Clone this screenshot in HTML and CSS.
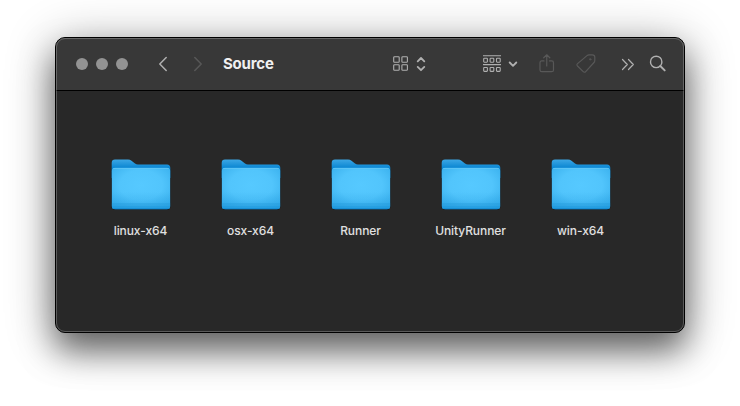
FILE: index.html
```html
<!DOCTYPE html>
<html lang="en">
<head>
<meta charset="utf-8">
<title>Source</title>
<link rel="stylesheet" href="styles.css">
</head>
<body>
<svg width="0" height="0" class="defs" aria-hidden="true">
  <defs>
    <linearGradient id="back" x1="0" y1="0" x2="0" y2="1">
      <stop offset="0" stop-color="#3ba6e4"/>
      <stop offset=".45" stop-color="#0a86d2"/>
      <stop offset="1" stop-color="#0a83cc"/>
    </linearGradient>
    <radialGradient id="front" cx=".5" cy=".42" r=".72">
      <stop offset="0" stop-color="#56c9ff"/>
      <stop offset=".5" stop-color="#52c5fc"/>
      <stop offset="1" stop-color="#35acea"/>
    </radialGradient>
    <linearGradient id="shade" x1="0" y1="0" x2="0" y2="1">
      <stop offset="0" stop-color="#1f98dc" stop-opacity="0"/>
      <stop offset="1" stop-color="#1f98dc" stop-opacity=".4"/>
    </linearGradient>
    <clipPath id="front-clip"><rect x="1.700" y="9.700" width="58.600" height="41.500" rx="3.500"/></clipPath>
    <symbol id="folder" viewBox="0 0 62 53">
      <rect x="1.500" y="10" width="59" height="42" rx="4" fill="#161e24"/>
      <path d="M1.700 14V5Q1.700 1.600 5 1.600H18Q20 1.600 21.500 2.800L25 5.500Q26.300 6.500 28 6.500H57Q60.300 6.500 60.300 10V20H1.700Z" fill="url(#back)"/>
      <g clip-path="url(#front-clip)">
        <rect x="1.500" y="9.500" width="59" height="42" fill="url(#front)"/>
        <rect x="1.500" y="34" width="59" height="17.500" fill="url(#shade)"/>
        <path d="M3 10.200H59" stroke="#66c8f5" stroke-width="1"/>
        <rect x="1.500" y="45" width="59" height="3" fill="#1d94d6" opacity=".3"/>
        <rect x="1.500" y="48" width="59" height="2" fill="#1490d6" opacity=".45"/>
        <rect x="1.500" y="50" width="59" height="2" fill="#0f86cf" opacity=".75"/>
      </g>
    </symbol>
  </defs>
</svg>
<main class="window">
  <header class="toolbar">
    <div class="lights"><i></i><i></i><i></i></div>
    <svg class="icon back" width="10" height="16" viewBox="0 0 10 16"><path d="M8.200 1.500 1.800 8l6.400 6.500" stroke-width="1.500"/></svg>
    <svg class="icon forward dim" width="10" height="16" viewBox="0 0 10 16"><path d="M1.800 1.500 8.200 8l-6.400 6.500" stroke-width="1.500"/></svg>
    <h1 class="title">Source</h1>
    <svg class="icon grid" width="16" height="16" viewBox="0 0 16 16"><g stroke-width="1.100"><rect x=".7" y=".7" width="5.500" height="5.500" rx=".8"/><rect x="8.900" y=".7" width="5.500" height="5.500" rx=".8"/><rect x=".7" y="8.700" width="5.500" height="5.500" rx=".8"/><rect x="8.900" y="8.700" width="5.500" height="5.500" rx=".8"/></g></svg>
    <svg class="icon updown" width="10" height="16" viewBox="0 0 10 16"><path d="M1.700 5.300 5 2l3.300 3.300M1.700 10.900 5 14.200l3.300-3.300" stroke-width="1.800"/></svg>
    <svg class="icon group" width="18" height="18" viewBox="0 0 18 18"><path d="M.3 .7H17.700M.3 9.600H17.700" stroke-width="1.100"/><g stroke-width="1.100"><rect x=".7" y="3.300" width="3.700" height="3.900" rx=".6"/><rect x="7.100" y="3.300" width="3.700" height="3.900" rx=".6"/><rect x="13.500" y="3.300" width="3.700" height="3.900" rx=".6"/><rect x=".7" y="12.500" width="3.700" height="3.900" rx=".6"/><rect x="7.100" y="12.500" width="3.700" height="3.900" rx=".6"/><rect x="13.500" y="12.500" width="3.700" height="3.900" rx=".6"/></g></svg>
    <svg class="icon down" width="10" height="8" viewBox="0 0 10 8"><path d="M1.700 2.500 5 5.800l3.300-3.300" stroke-width="1.800"/></svg>
    <svg class="icon share dim" width="16" height="20" viewBox="0 0 16 20"><path d="M5 6.900H2.800Q1 6.900 1 8.700V15.900Q1 17.700 2.800 17.700H12.700Q14.500 17.700 14.500 15.900V8.700Q14.500 6.900 12.700 6.900H10.500M7.750 11.900V.9M4.700 3.800 7.750 .8 10.800 3.800" stroke-width="1.200"/></svg>
    <svg class="icon tag dim" width="20" height="20" viewBox="0 0 20 20"><path d="M11 1.600Q11.900 .8 13 .8H16.300Q18.800 .8 18.800 3.300V6.200Q18.800 7.600 18 8.500L9.700 17.600Q8.500 18.900 7.200 17.600L1.500 12Q.3 10.700 1.600 9.600Z" stroke-width="1.200"/><circle cx="14.200" cy="5.300" r=".7"/></svg>
    <svg class="icon more" width="14" height="14" viewBox="0 0 14 14"><path d="M1.500 2.500 6.300 7.500l-4.800 5M7.500 2.500l4.800 5-4.800 5" stroke-width="1.200"/></svg>
    <svg class="icon search" width="18" height="18" viewBox="0 0 18 18"><circle cx="7.200" cy="6.900" r="5.700" stroke-width="1.400"/><path d="M11.300 11 15.700 15.400" stroke-width="1.900"/></svg>
  </header>
  <section class="files">
    <figure class="file"><svg width="62" height="53"><use href="#folder"/></svg><figcaption>linux-x64</figcaption></figure>
    <figure class="file"><svg width="62" height="53"><use href="#folder"/></svg><figcaption>osx-x64</figcaption></figure>
    <figure class="file"><svg width="62" height="53"><use href="#folder"/></svg><figcaption>Runner</figcaption></figure>
    <figure class="file"><svg width="62" height="53"><use href="#folder"/></svg><figcaption>UnityRunner</figcaption></figure>
    <figure class="file"><svg width="62" height="53"><use href="#folder"/></svg><figcaption>win-x64</figcaption></figure>
  </section>
</main>
</body>
</html>
```
FILE: styles.css
```css
* { box-sizing: border-box; }

body {
  margin: 0;
  padding: 37px 55px 73px;
  height: 406px;
  overflow: hidden;
  background: #fff;
  font-family: Inter, "Liberation Sans", sans-serif;
}

.defs { position: absolute; }

.window {
  position: relative;
  width: 630px;
  height: 296px;
  border: 1px solid #000;
  border-radius: 10px;
  background: #282828;
  box-shadow: 0 18px 32px rgba(0, 0, 0, .5), 0 6px 50px rgba(0, 0, 0, .32);
}

.window::after {
  content: "";
  position: absolute;
  inset: 0;
  border: 1px solid rgba(255, 255, 255, .24);
  border-radius: 9px;
  pointer-events: none;
}

.toolbar {
  display: flex;
  align-items: center;
  height: 53px;
  padding: 0 17px 0 20px;
  background: #383838;
  border-bottom: 1px solid #000;
  border-radius: 9px 9px 0 0;
}

.lights { display: flex; gap: 8px; }
.lights i { width: 12px; height: 12px; border-radius: 50%; background: #939393; }

.icon {
  flex: none;
  fill: none;
  stroke: #b0b0b0;
  stroke-linecap: round;
  stroke-linejoin: round;
}
.dim { stroke: #585858; }

.back { margin-left: 30px; }
.forward { margin-left: 25px; }
.title {
  width: 171px;
  margin: 0 0 0 20px;
  font-size: 15px;
  line-height: 20px;
  font-weight: 700;
  letter-spacing: -.2px;
  color: #f0f0f0;
}
.updown { margin-left: 7px; }
.group { margin-left: 57px; }
.down { margin-left: 7px; }
.share { margin-left: 21px; }
.tag { margin-left: 21px; }
.more { margin-left: 25px; }
.search { margin-left: 14px; }

.files {
  display: flex;
  padding: 67px 0 0 30px;
}
.file {
  display: flex;
  flex-direction: column;
  align-items: center;
  width: 110px;
  margin: 0;
}
.file svg { display: block; }
.file figcaption {
  margin: 12px 1px 0 0;
  font-size: 12px;
  line-height: 16px;
  font-weight: 500;
  letter-spacing: -.08px;
  color: #e0e0e0;
}
```
